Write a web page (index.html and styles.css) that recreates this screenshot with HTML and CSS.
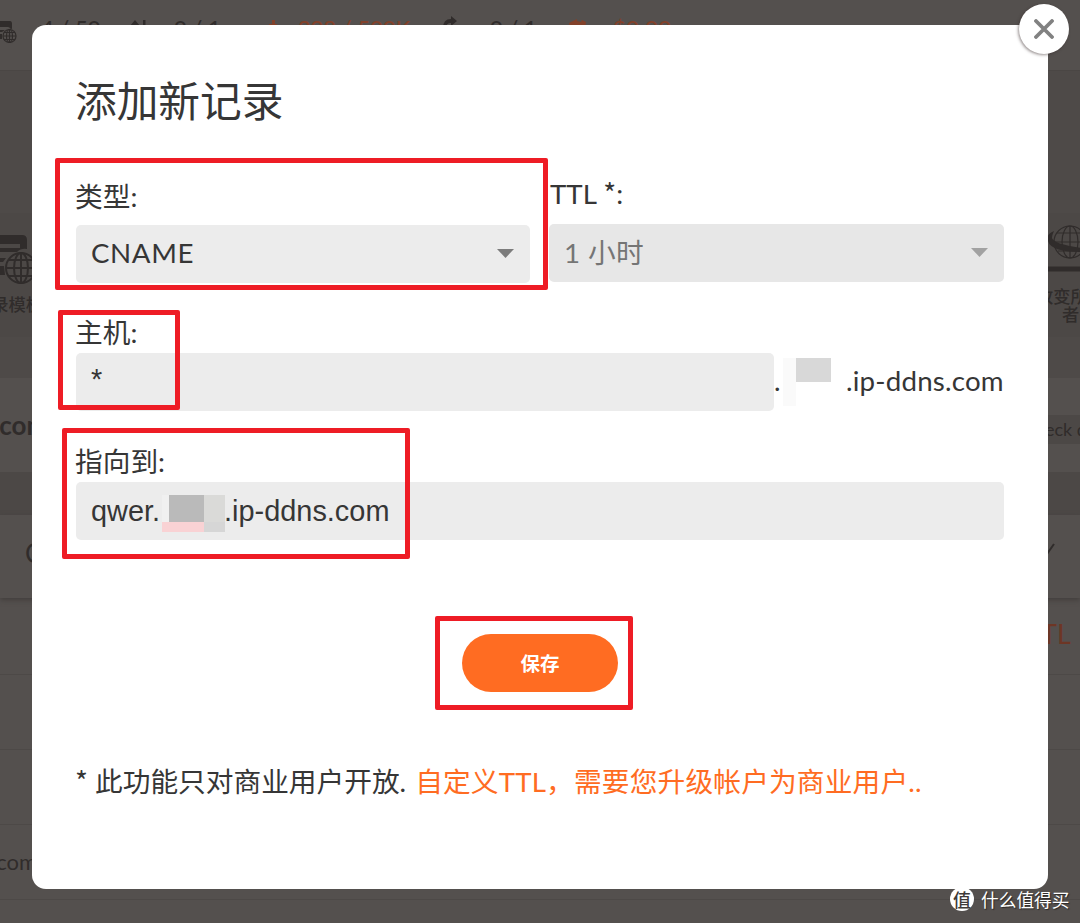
FILE: index.html
```html
<!DOCTYPE html>
<html lang="zh-CN">
<head>
<meta charset="utf-8">
<title>添加新记录</title>
<link rel="stylesheet" href="styles.css">
</head>
<body>
<main class="screen">
  <div class="page" aria-hidden="true">
    <div class="band topbar">
      <svg class="pin stats-icon" width="18" height="26" viewBox="0 0 18 26"><path d="M0 1h10q2 0 2 3v5h-2q0-2-2-2H0zM0 10h5l-3 2H0zM0 14h2v5H0z"/><circle class="cut" cx="9.5" cy="16" r="7.5"/><g class="line"><circle cx="9.5" cy="16" r="6.5"/><ellipse cx="9.5" cy="16" rx="3" ry="6.5"/><path d="M9.5 9.5v13M3 16h13M4 12.5h11M4 19.5h11"/></g></svg>
      <span class="pin stat s1">4 / 50</span>
      <svg class="pin updown" width="18" height="18" viewBox="0 0 18 18"><path d="M0 6L5 0l5 6H7v10H3V6zM13 0h2.5v14H13z"/></svg>
      <span class="pin stat s2">0 / 1</span>
      <svg class="pin mark" width="8" height="12" viewBox="0 0 8 12"><path d="M3 0h3v12H3zM0 4h8v8H0z"/></svg>
      <span class="pin stat s3 hot">298 / 500K</span>
      <svg class="pin forward" width="14" height="18" viewBox="0 0 14 18"><path d="M8 0l6 5-6 5V7Q3 7 3 12H0Q0 3 8 3z"/></svg>
      <span class="pin stat s4">0 / 1</span>
      <svg class="pin refresh" width="17" height="12" viewBox="0 0 17 12"><path d="M0 4l8-4v2l4 1 1-2 4 2-1 7H1z"/></svg>
      <span class="pin stat s5 hot">$0.00</span>
    </div>
    <div class="band gap"></div>
    <div class="band tools">
      <svg class="pin template-icon" width="36" height="56" viewBox="0 0 36 56"><path d="M0 2h22q5 0 5 5v9q-6-1-10 3H0v-4h20v-4H0zM0 25h6l-3 4H0zM0 33h4l1 9H0z"/><g class="line thick"><circle cx="21" cy="35" r="15"/><ellipse cx="21" cy="35" rx="7" ry="15"/><path d="M21 20v30M6 35h30M9 27h24M9 43h24"/></g></svg>
      <span class="pin tool-left">录模板</span>
      <svg class="pin owner-icon" width="34" height="52" viewBox="0 0 34 52"><g class="line"><circle cx="23" cy="19" r="16"/><ellipse cx="23" cy="19" rx="8" ry="16"/><path d="M23 3v32M7 19h27M10 10h24M11 28h23"/></g><path d="M7 8Q-2 12 1 18q3 11 33 11v-4Q7 21 5 15q0-3 2-7zM1 43.500h33v5H1z"/></svg>
      <span class="pin tool-right">改变所有<br>者</span>
    </div>
    <div class="band under"></div>
    <div class="band domain"><span class="pin zone">.com</span><span class="pin check">eck dns</span></div>
    <div class="band strip"></div>
    <div class="band filters"><span class="pin edge-c">C</span><svg class="pin tick" width="14" height="14" viewBox="0 0 14 14"><path class="tick-line" d="M0 12L7 2"/></svg></div>
    <div class="band row first"><span class="pin ttl-head">TTL</span></div>
    <div class="band row"></div>
    <div class="band row"></div>
    <div class="band row"><span class="pin row-name">.com</span></div>
  </div>

  <section class="modal">
    <h1 class="title">添加新记录</h1>
    <div class="pair">
      <div class="field">
        <div class="label">类型:</div>
        <div class="control"><span class="value cname">CNAME</span><svg class="caret" width="17" height="9" viewBox="0 0 17 9"><path d="M0 0h17L8.500 9z"/></svg></div>
      </div>
      <div class="field ttl">
        <div class="label">TTL <span class="asterisk">*</span>:</div>
        <div class="control disabled"><span class="value hour">1 小时</span><svg class="caret" width="17" height="9" viewBox="0 0 17 9"><path d="M0 0h17L8.500 9z"/></svg></div>
      </div>
    </div>
    <div class="host">
      <div class="label tight">主机:</div>
      <div class="host-row">
        <div class="control host-input"><span class="typed star">*</span></div>
        <span class="value dot">.</span>
        <span class="mosaic-a"><i></i><b></b></span>
        <span class="value suffix">.ip-ddns.com</span>
      </div>
    </div>
    <div class="target">
      <div class="label tight">指向到:</div>
      <div class="control"><span class="typed">qwer.</span><span class="mosaic-b"><i></i><i></i><i></i><i></i><i></i><i></i></span><span class="typed">.ip-ddns.com</span></div>
    </div>
    <button class="save" type="button">保存</button>
    <p class="note"><span class="note-text"><span class="asterisk">*</span> 此功能只对商业用户开放.</span> <a class="upgrade">自定义TTL，需要您升级帐户为商业用户..</a></p>
  </section>

  <button class="close" type="button" aria-label="关闭"><svg width="20" height="20" viewBox="0 0 20 20"><path d="M2 2l16 16M18 2L2 18"/></svg></button>

  <div class="mark-box box-type"></div>
  <div class="mark-box box-host"></div>
  <div class="mark-box box-target"></div>
  <div class="mark-box box-save"></div>

  <div class="watermark"><span class="coin">值</span><span>什么值得买</span></div>
</main>
</body>
</html>
```

FILE: styles.css
```css
* { box-sizing: border-box; }
body { margin: 0; }
.screen {
  position: relative;
  width: 1080px;
  height: 923px;
  overflow: hidden;
  background: #54504e;
  color: #363636;
  font-family: Lato, "Noto Sans CJK SC", sans-serif;
  font-size: 27.7px;
}

/* dimmed page behind the dialog */
.page { display: flex; flex-direction: column; height: 923px; color: #302c2b; fill: #302c2b; }
.band { position: relative; flex: none; }
.pin { position: absolute; white-space: nowrap; }
.line { fill: none; stroke: #302c2b; stroke-width: 1.2; }
.thick { stroke-width: 2; }
.cut { fill: #54504e; }
.topbar { height: 71px; border-bottom: 1px solid #4a4644; }
.gap { height: 142px; background: #4e4a48; }
.tools { height: 124px; background: #4c4846; }
.under { height: 41px; background: #4e4a48; }
.domain { height: 94px; }
.strip { height: 43px; background: #4c4846; }
.filters { height: 83px; box-shadow: 0 2px 5px #423e3c; }
.row { height: 75px; border-bottom: 1px solid #4d4947; }
.row.first { height: 77px; }
.stats-icon { left: 0; top: 20px; }
.stat { top: 15px; font-size: 22px; line-height: 26px; font-weight: 500; }
.hot { color: #82412a; }
.s1 { left: 41px; }
.updown { left: 130px; top: 20px; }
.s2 { left: 174px; }
.mark { left: 269px; top: 20px; fill: #82412a; }
.s3 { left: 298px; }
.forward { left: 443px; top: 16px; }
.s4 { left: 490px; }
.refresh { left: 569px; top: 19px; fill: #82412a; }
.s5 { left: 613px; letter-spacing: .5px; }
.template-icon { left: 0; top: 20px; }
.tool-left { right: 1037px; top: 80px; font-size: 17.3px; line-height: 24px; font-weight: 500; }
.owner-icon { left: 1047px; top: 10px; }
.tool-right { left: 1036px; top: 75px; font-size: 17.3px; line-height: 17.5px; font-weight: 500; text-align: center; }
.zone { left: -7px; top: 31px; font-size: 26px; line-height: 32px; font-weight: 700; }
.check { left: 1045px; top: 37px; padding-right: 20px; background: #4c4846; font-size: 18px; line-height: 29px; }
.edge-c { left: 25px; top: 22px; font-size: 26px; line-height: 32px; }
.tick { left: 1047px; top: 27px; }
.tick-line { fill: none; stroke: #302c2b; stroke-width: 2; }
.ttl-head { left: 1025px; top: 20px; color: #6d3625; font-size: 27px; line-height: 32px; }
.row-name { left: -9px; top: 21px; font-size: 22px; line-height: 32px; }

/* dialog */
.modal {
  position: absolute;
  left: 32px;
  top: 25px;
  display: flex;
  flex-direction: column;
  width: 1016px;
  height: 864px;
  padding: 46px 44px 0;
  border-radius: 14px;
  background: #fff;
}
.title { margin: 0 0 46px -1px; font-size: 41.7px; font-weight: 400; line-height: 60px; }
.pair { display: grid; grid-template-columns: 454px 455px; column-gap: 19px; }
.label { height: 48px; line-height: 40px; text-indent: -1px; }
.label.tight { height: 40px; }
.ttl { margin-top: -1px; }
.ttl .label { line-height: 36px; text-indent: 1px; }
.asterisk { font-family: "Noto Sans CJK SC", sans-serif; line-height: 1; }
.control {
  display: flex;
  align-items: center;
  height: 58px;
  padding: 0 16px 0 15px;
  border-radius: 5px;
  background: #ececec;
}
.disabled { background: #e7e7e7; color: #757575; }
.value { padding-bottom: 4px; }
.cname { letter-spacing: .6px; }
.hour { letter-spacing: .4px; padding-bottom: 5px; }
.caret { margin: -2px 0 0 auto; fill: #7c7c7c; }
.disabled .caret { fill: #a2a2a2; }
.host { margin-top: 30px; }
.host-row { display: flex; align-items: center; }
.host-input { width: 698px; }
.typed { font-family: "Liberation Sans", sans-serif; font-size: 28.9px; }
.star { margin-top: -6px; }
.dot { width: 9px; }
.mosaic-a { display: flex; align-self: flex-start; width: 63px; margin-top: 5px; }
.mosaic-a i { width: 13px; height: 48px; background: #fafafa; }
.mosaic-a b { width: 35px; height: 24px; background: #d8d8d8; }
.suffix { white-space: nowrap; letter-spacing: .2px; }
.target { margin-top: 31px; }
.mosaic-b { display: grid; grid-template-columns: 7px 35px 21px; grid-template-rows: 27px 10px; margin: 4px -1px 0 2px; }
.mosaic-b i:nth-child(1) { background: #f0f0f0; }
.mosaic-b i:nth-child(2) { background: #bababa; }
.mosaic-b i:nth-child(3) { background: #dadad8; }
.mosaic-b i:nth-child(4), .mosaic-b i:nth-child(5) { background: #f9d2d4; }
.mosaic-b i:nth-child(6) { background: #d6d6d6; }
.save {
  align-self: center;
  width: 156px;
  height: 58px;
  margin: 94px 0 0;
  padding: 0;
  border: 0;
  border-radius: 29px;
  background: #ff6c22;
  color: #fff;
  font: 700 19.5px/58px "Noto Sans CJK SC", sans-serif;
}
.note { display: flex; gap: 9px; margin: 70px 0 0 -1px; line-height: 40px; white-space: nowrap; }
.upgrade { color: #ff6c22; letter-spacing: .17px; }
.close {
  position: absolute;
  left: 1019px;
  top: 4px;
  display: grid;
  place-items: center;
  width: 50px;
  height: 50px;
  padding: 0;
  border: 0;
  border-radius: 50%;
  background: #fff;
  box-shadow: -1px 1px 3px rgba(50, 35, 35, .5);
}
.close path { fill: none; stroke: #818181; stroke-width: 3.8; stroke-linecap: round; }

/* highlight frames drawn over the dialog */
.mark-box { position: absolute; border: 5px solid #ee1c25; border-radius: 2px; }
.box-type { left: 55px; top: 158px; width: 493px; height: 132px; }
.box-host { left: 58px; top: 310px; width: 122px; height: 100px; }
.box-target { left: 62px; top: 428px; width: 348px; height: 131px; }
.box-save { left: 435px; top: 616px; width: 198px; height: 94px; }

.watermark {
  position: absolute;
  left: 950px;
  top: 887px;
  display: flex;
  align-items: center;
  gap: 7px;
  color: #fff;
  font: 17.7px/24px "Noto Sans CJK SC", sans-serif;
  text-shadow: 1px 1px 1px #2b2827;
}
.coin {
  width: 24px;
  height: 24px;
  border-radius: 50%;
  background: #fff;
  color: #3e3a39;
  font-weight: 500;
  font-size: 18px;
  text-align: center;
  text-shadow: none;
}
```
